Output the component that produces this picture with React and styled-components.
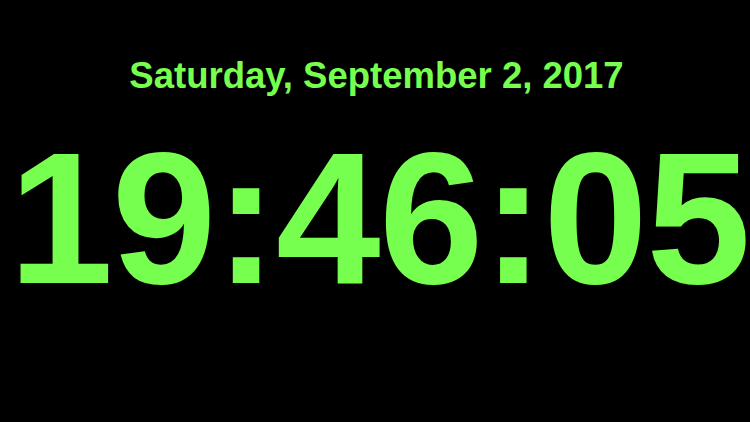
import styled, { createGlobalStyle } from "styled-components";

const Global = createGlobalStyle`
  html, body { margin: 0; padding: 0; background: #000; }
  body { font-family: "Liberation Sans", Arial, sans-serif; }
`;

const Screen = styled.main`
  width: 750px;
  height: 422px;
  background: #000;
  color: #76ff4e;
  display: flex;
  flex-direction: column;
  align-items: center;
  overflow: hidden;
`;

const DateLine = styled.div`
  margin-top: 54px;
  margin-left: 3px;
  font-size: 36.5px;
  font-weight: bold;
  line-height: 44px;
  white-space: nowrap;
`;

const Time = styled.div`
  margin-top: 26px;
  margin-left: 8px;
  font-size: 188px;
  font-weight: bold;
  line-height: 188px;
  letter-spacing: -1.5px;
  white-space: nowrap;
`;

const App = () => {
  return (
    <>
      <Global />
      <Screen>
        <DateLine>Saturday, September 2, 2017</DateLine>
        <Time>19:46:05</Time>
      </Screen>
    </>
  );
};

export default App;
